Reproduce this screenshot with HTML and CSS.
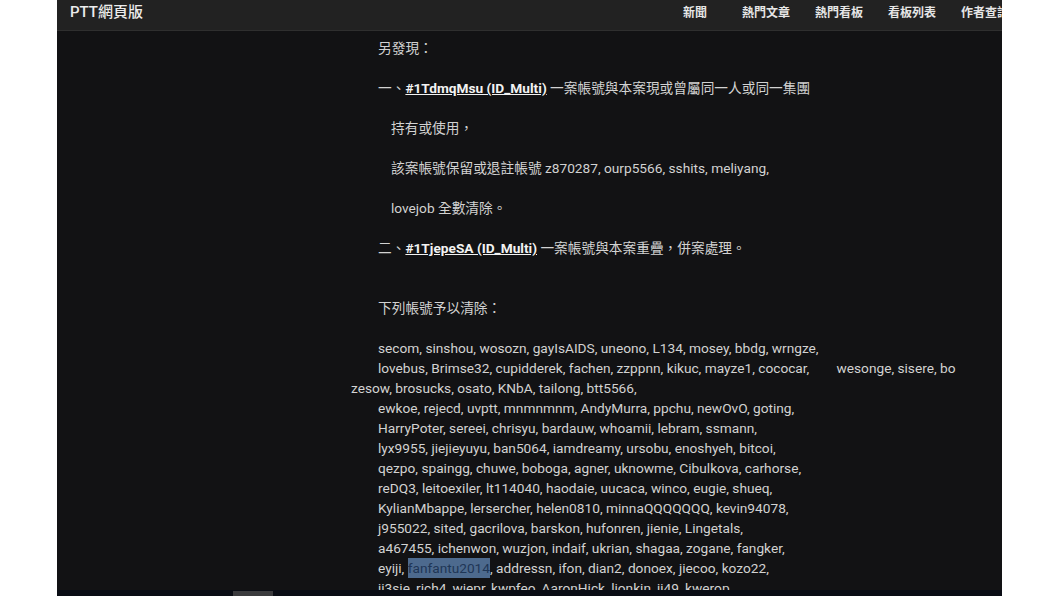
FILE: index.html
```html
<!DOCTYPE html>
<html lang="zh-Hant">
<head>
<meta charset="utf-8">
<title>PTT網頁版</title>
<link rel="stylesheet" href="styles.css">
</head>
<body>
<div class="page">
  <header class="topbar">
    <div class="logo">PTT網頁版</div>
    <nav class="nav">
      <a class="nav-item first">新聞</a>
      <a class="nav-item">熱門文章</a>
      <a class="nav-item">熱門看板</a>
      <a class="nav-item">看板列表</a>
      <a class="nav-item">作者查詢</a>
    </nav>
  </header>
  <main class="content">
    <p class="line">另發現：</p>
    <p class="line gap">一、<a class="link">#1TdmqMsu (ID_Multi)</a> 一案帳號與本案現或曾屬同一人或同一集團</p>
    <p class="line gap sub">持有或使用，</p>
    <p class="line gap sub">該案帳號保留或退註帳號 z870287, ourp5566, sshits, meliyang,</p>
    <p class="line gap sub">lovejob 全數清除。</p>
    <p class="line gap">二、<a class="link">#1TjepeSA (ID_Multi)</a> 一案帳號與本案重疊，併案處理。</p>
    <p class="line gap2">下列帳號予以清除：</p>
    <p class="line gap">secom, sinshou, wosozn, gayIsAIDS, uneono, L134, mosey, bbdg, wrngze,</p>
    <p class="line">lovebus, Brimse32, cupidderek, fachen, zzppnn, kikuc, mayze1, cococar,        wesonge, sisere, bozesow, brosucks, osato, KNbA, tailong, btt5566,</p>
    <p class="line">ewkoe, rejecd, uvptt, mnmnmnm, AndyMurra, ppchu, newOvO, goting,</p>
    <p class="line">HarryPoter, sereei, chrisyu, bardauw, whoamii, lebram, ssmann,</p>
    <p class="line">lyx9955, jiejieyuyu, ban5064, iamdreamy, ursobu, enoshyeh, bitcoi,</p>
    <p class="line">qezpo, spaingg, chuwe, boboga, agner, uknowme, Cibulkova, carhorse,</p>
    <p class="line">reDQ3, leitoexiler, lt114040, haodaie, uucaca, winco, eugie, shueq,</p>
    <p class="line">KylianMbappe, lersercher, helen0810, minnaQQQQQQQ, kevin94078,</p>
    <p class="line">j955022, sited, gacrilova, barskon, hufonren, jienie, Lingetals,</p>
    <p class="line">a467455, ichenwon, wuzjon, indaif, ukrian, shagaa, zogane, fangker,</p>
    <p class="line">eyiji, <span class="sel">fanfantu2014</span>, addressn, ifon, dian2, donoex, jiecoo, kozo22,</p>
    <p class="line">ji3sie, rich4, wiepr, kwpfeo, AaronHick, lionkin, jj49, kwerop,</p>
    <p class="line">sunnyday, qwer1234, moonlit, tiger77, zxcvb, hello99, abcde,</p>
  </main>
  <div class="hscroll"><div class="thumb"></div></div>
</div>
</body>
</html>
```
FILE: styles.css
```css
html, body {
  margin: 0;
  padding: 0;
  background: #ffffff;
}
.page {
  position: relative;
  margin-left: 57px;
  width: 945px;
  height: 596px;
  background: #121214;
  overflow: hidden;
  display: flex;
  flex-direction: column;
  font-family: Roboto, "Noto Sans CJK TC", sans-serif;
}
.topbar {
  flex: 0 0 auto;
  height: 30px;
  background: #222222;
  border-bottom: 1px solid #2f2f2f;
  display: flex;
  align-items: flex-start;
  padding-left: 13px;
  white-space: nowrap;
}
.logo {
  flex: 0 0 613px;
  color: #ececec;
  font-size: 15px;
  font-weight: 500;
  line-height: 24px;
}
.nav {
  display: flex;
  flex: 0 0 auto;
  gap: 25px;
}
.nav-item {
  color: #e6e6e6;
  font-size: 12px;
  font-weight: 700;
  line-height: 24px;
  font-family: "Noto Sans CJK TC", sans-serif;
}
.nav-item.first {
  margin-right: 10px;
}
.content {
  padding: 7px 0 0 294px;
  width: 609px;
  color: #d2d2d2;
  font-size: 13.7px;
}
.line {
  margin: 0;
  line-height: 20px;
  text-indent: 27px;
  white-space: pre-wrap;
  word-break: break-all;
}
.line.sub {
  text-indent: 40px;
}
.gap {
  margin-top: 20px;
}
.gap2 {
  margin-top: 40px;
}
.link {
  color: #f2f2f2;
  font-weight: 700;
  text-decoration: underline;
}
.sel {
  background: #4d6a8e;
  color: #1f3656;
  padding: 2px 0;
}
.hscroll {
  position: absolute;
  left: 0;
  right: 0;
  bottom: 0;
  height: 6px;
  background: #0a0d15;
}
.thumb {
  position: absolute;
  left: 176px;
  top: 1px;
  width: 40px;
  height: 5px;
  background: #3b3b3e;
}
```
